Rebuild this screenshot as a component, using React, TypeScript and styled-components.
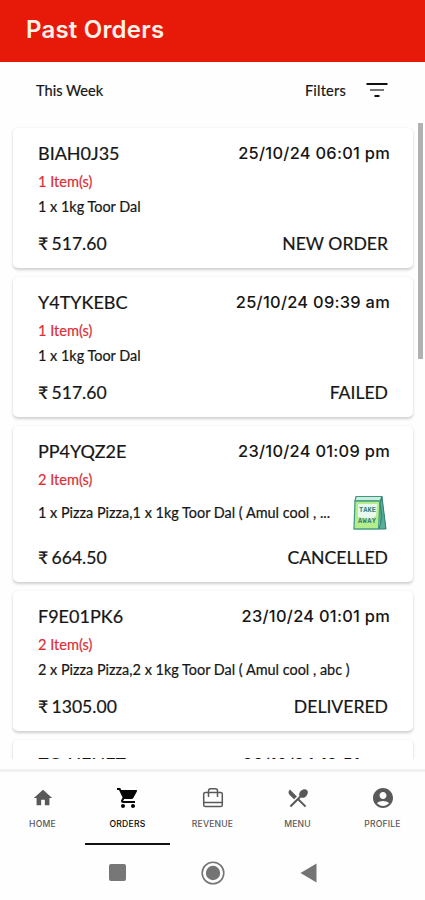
import React from "react";
import styled, { createGlobalStyle } from "styled-components";
import {
  MdHome,
  MdShoppingCart,
  MdRestaurantMenu,
  MdAccountCircle,
} from "react-icons/md";

const GlobalStyle = createGlobalStyle`
  *, *::before, *::after { box-sizing: border-box; }
  body {
    margin: 0;
    background: #fefefe;
    font-family: Lato, "Noto Sans", sans-serif;
    color: #161616;
    overflow: hidden;
  }
`;

const Screen = styled.div`
  display: flex;
  flex-direction: column;
  width: 425px;
  height: 900px;
  background: #fefefe;
`;

const Header = styled.header`
  display: flex;
  align-items: center;
  flex: 0 0 62px;
  padding: 0 26px 2px;
  background: #e71a0a;
`;

const Title = styled.h1`
  margin: 0;
  font: 600 24px/30px Inter, "Open Sans", sans-serif;
  letter-spacing: 0.2px;
  color: #fff1e8;
`;

const FilterBar = styled.div`
  display: flex;
  align-items: center;
  justify-content: space-between;
  flex: 0 0 61px;
  padding: 0 34px 5px 36px;
  font-size: 14.6px;
  -webkit-text-stroke: 0.2px currentColor;
`;

const FilterButton = styled.div`
  display: flex;
  align-items: center;
  gap: 17px;
  letter-spacing: 0.2px;
`;

const ListArea = styled.main`
  display: flex;
  flex: 0 0 636px;
  overflow: hidden;
`;

const Cards = styled.div`
  display: flex;
  flex-direction: column;
  flex: 1;
  gap: 9px;
  padding: 4.5px 4px 0 13px;
`;

const ScrollTrack = styled.div`
  flex: 0 0 8px;
  padding-left: 1px;
`;

const ScrollThumb = styled.div`
  width: 5px;
  height: 236px;
  background: #b1b1b1;
`;

const Card = styled.article<{ $tall?: boolean; $peek?: boolean }>`
  display: flex;
  flex-direction: column;
  flex: 0 0 ${(p) => (p.$tall ? 156.5 : 140)}px;
  min-height: 0;
  padding: ${(p) => (p.$peek ? 9.5 : 11)}px 23px 0 25px;
  border-radius: 5px;
  background: #fff;
  box-shadow: 0 1.5px 3px rgba(0, 0, 0, 0.19);
`;

const Row = styled.div<{ $height: number }>`
  display: flex;
  align-items: center;
  justify-content: space-between;
  flex: 0 0 ${(p) => p.$height}px;
  white-space: nowrap;
`;

const OrderId = styled.span`
  font-size: 18px;
  -webkit-text-stroke: 0.2px currentColor;
`;

const OrderDate = styled.time`
  font: 500 16.4px/24px Inter, "Open Sans", sans-serif;
  letter-spacing: 0.28px;
`;

const ItemCount = styled.span`
  font-size: 14.6px;
  color: #dc3037;
  -webkit-text-stroke: 0.2px currentColor;
`;

const Items = styled.span`
  font-size: 14.45px;
  -webkit-text-stroke: 0.2px currentColor;
`;

const Price = styled.span`
  font-size: 17.6px;
  word-spacing: -1.2px;
  -webkit-text-stroke: 0.2px currentColor;
`;

const Status = styled(Price)`
  padding-right: 2px;
  word-spacing: 0;
`;

const BagSvg = styled.svg`
  display: block;
  margin-right: 3px;
`;

const TabBar = styled.nav`
  display: flex;
  flex: 0 0 76px;
  margin-top: 10px;
  border-top: 3px solid #f1f1f1;
`;

const Tab = styled.div<{ $active?: boolean }>`
  display: flex;
  flex-direction: column;
  align-items: center;
  flex: 1;
  padding-top: 14px;
  color: ${(p) => (p.$active ? "#050505" : "#595959")};
  border-bottom: 2px solid ${(p) => (p.$active ? "#111" : "transparent")};
`;

const TabIcon = styled.span`
  display: flex;
  align-items: center;
  justify-content: center;
  height: 24px;
`;

const TabLabel = styled.span`
  margin-top: 8px;
  font: 500 8.6px/12px Inter, sans-serif;
  letter-spacing: 0.2px;
`;

const SystemBar = styled.footer`
  display: flex;
  align-items: center;
  justify-content: space-between;
  flex: 1;
  padding: 0 108px 0 109px;
`;

function FilterIcon() {
  return (
    <svg width="28" height="28" viewBox="0 0 28 28">
      <rect x="3.5" y="7" width="21" height="2" fill="#111" />
      <rect x="7" y="13" width="14" height="2" fill="#777" />
      <rect x="11.5" y="19" width="5" height="2" fill="#111" />
    </svg>
  );
}

function RevenueIcon({ size }: { size: number }) {
  return (
    <svg width={size} height={size} viewBox="0 0 24 24" fill="none" stroke="currentColor" strokeWidth="1.5">
      <rect x="2.7" y="6.5" width="18.6" height="14" rx="1.6" />
      <path d="M2.7 16.5H21.3M7.5 11V5Q7.5 2.8 9.7 2.8H14.3Q16.5 2.8 16.5 5V11" />
    </svg>
  );
}

function TakeAwayBag() {
  return (
    <BagSvg width="34" height="36" viewBox="0 0 34 36">
      <path d="M3 1.5H29L33 33L27 34L25 7Z" fill="#4fa88d" />
      <path d="M3 1.5H29L27 6H2Z" fill="#c9eee0" stroke="#43967f" strokeWidth="1.2" />
      <path d="M2 6H27L25.5 34H1Z" fill="#b5ec8c" stroke="#43a080" strokeWidth="1.3" />
      <path d="M29 2L27 8L29 22L26 34H33Z" fill="#58ae98" stroke="#347e73" strokeWidth="1" />
      <path d="M5 9H24L23 21L18 24L5 22Z" fill="#e8faef" />
      <g fill="#347e80" fontFamily="Liberation Mono, monospace" fontSize="7" fontWeight="700">
        <text x="6" y="17" textLength="17">TAKE</text>
        <text x="5" y="27.5" textLength="18">AWAY</text>
      </g>
    </BagSvg>
  );
}

interface Order {
  id: string;
  date: string;
  count: number;
  items: string;
  price: string;
  status: string;
  takeAway?: boolean;
}

const orders: Order[] = [
  { id: "BIAH0J35", date: "25/10/24 06:01 pm", count: 1, items: "1 x 1kg Toor Dal", price: "517.60", status: "NEW ORDER" },
  { id: "Y4TYKEBC", date: "25/10/24 09:39 am", count: 1, items: "1 x 1kg Toor Dal", price: "517.60", status: "FAILED" },
  { id: "PP4YQZ2E", date: "23/10/24 01:09 pm", count: 2, items: "1 x Pizza Pizza,1 x 1kg Toor Dal ( Amul cool , ...", price: "664.50", status: "CANCELLED", takeAway: true },
  { id: "F9E01PK6", date: "23/10/24 01:01 pm", count: 2, items: "2 x Pizza Pizza,2 x 1kg Toor Dal ( Amul cool , abc )", price: "1305.00", status: "DELIVERED" },
];

const tabs = [
  { label: "HOME", Icon: MdHome, size: 22 },
  { label: "ORDERS", Icon: MdShoppingCart, size: 24, active: true },
  { label: "REVENUE", Icon: RevenueIcon, size: 24 },
  { label: "MENU", Icon: MdRestaurantMenu, size: 24 },
  { label: "PROFILE", Icon: MdAccountCircle, size: 24 },
];

function OrderCard({ order }: { order: Order }) {
  return (
    <Card $tall={order.takeAway}>
      <Row $height={28}>
        <OrderId>{order.id}</OrderId>
        <OrderDate>{order.date}</OrderDate>
      </Row>
      <Row $height={29}>
        <ItemCount>{order.count} Item(s)</ItemCount>
      </Row>
      <Row $height={order.takeAway ? 38 : 21}>
        <Items>{order.items}</Items>
        {order.takeAway && <TakeAwayBag />}
      </Row>
      <Row $height={order.takeAway ? 51 : 53}>
        <Price>₹ {order.price}</Price>
        <Status>{order.status}</Status>
      </Row>
    </Card>
  );
}

export default function App() {
  return (
    <>
      <GlobalStyle />
      <Screen>
        <Header>
          <Title>Past Orders</Title>
        </Header>
        <FilterBar>
          <span>This Week</span>
          <FilterButton>
            <span>Filters</span>
            <FilterIcon />
          </FilterButton>
        </FilterBar>
        <ListArea>
          <Cards>
            {orders.map((order) => (
              <OrderCard key={order.id} order={order} />
            ))}
            <Card $peek>
              <Row $height={28}>
                <OrderId>ZO4JENFZ</OrderId>
                <OrderDate>23/10/24 12:51 pm</OrderDate>
              </Row>
            </Card>
          </Cards>
          <ScrollTrack>
            <ScrollThumb />
          </ScrollTrack>
        </ListArea>
        <TabBar>
          {tabs.map(({ label, Icon, size, active }) => (
            <Tab key={label} $active={active}>
              <TabIcon>
                <Icon size={size} />
              </TabIcon>
              <TabLabel>{label}</TabLabel>
            </Tab>
          ))}
        </TabBar>
        <SystemBar>
          <svg width="17" height="17" viewBox="0 0 17 17">
            <rect width="17" height="17" rx="2" fill="#777" />
          </svg>
          <svg width="24" height="24" viewBox="0 0 24 24">
            <circle cx="12" cy="12" r="10.8" fill="none" stroke="#747474" strokeWidth="1.6" />
            <circle cx="12" cy="12" r="7.2" fill="#747474" />
          </svg>
          <svg width="17" height="20" viewBox="0 0 17 20">
            <path d="M16.5 0.5V19.5L0.5 10Z" fill="#747474" />
          </svg>
        </SystemBar>
      </Screen>
    </>
  );
}
